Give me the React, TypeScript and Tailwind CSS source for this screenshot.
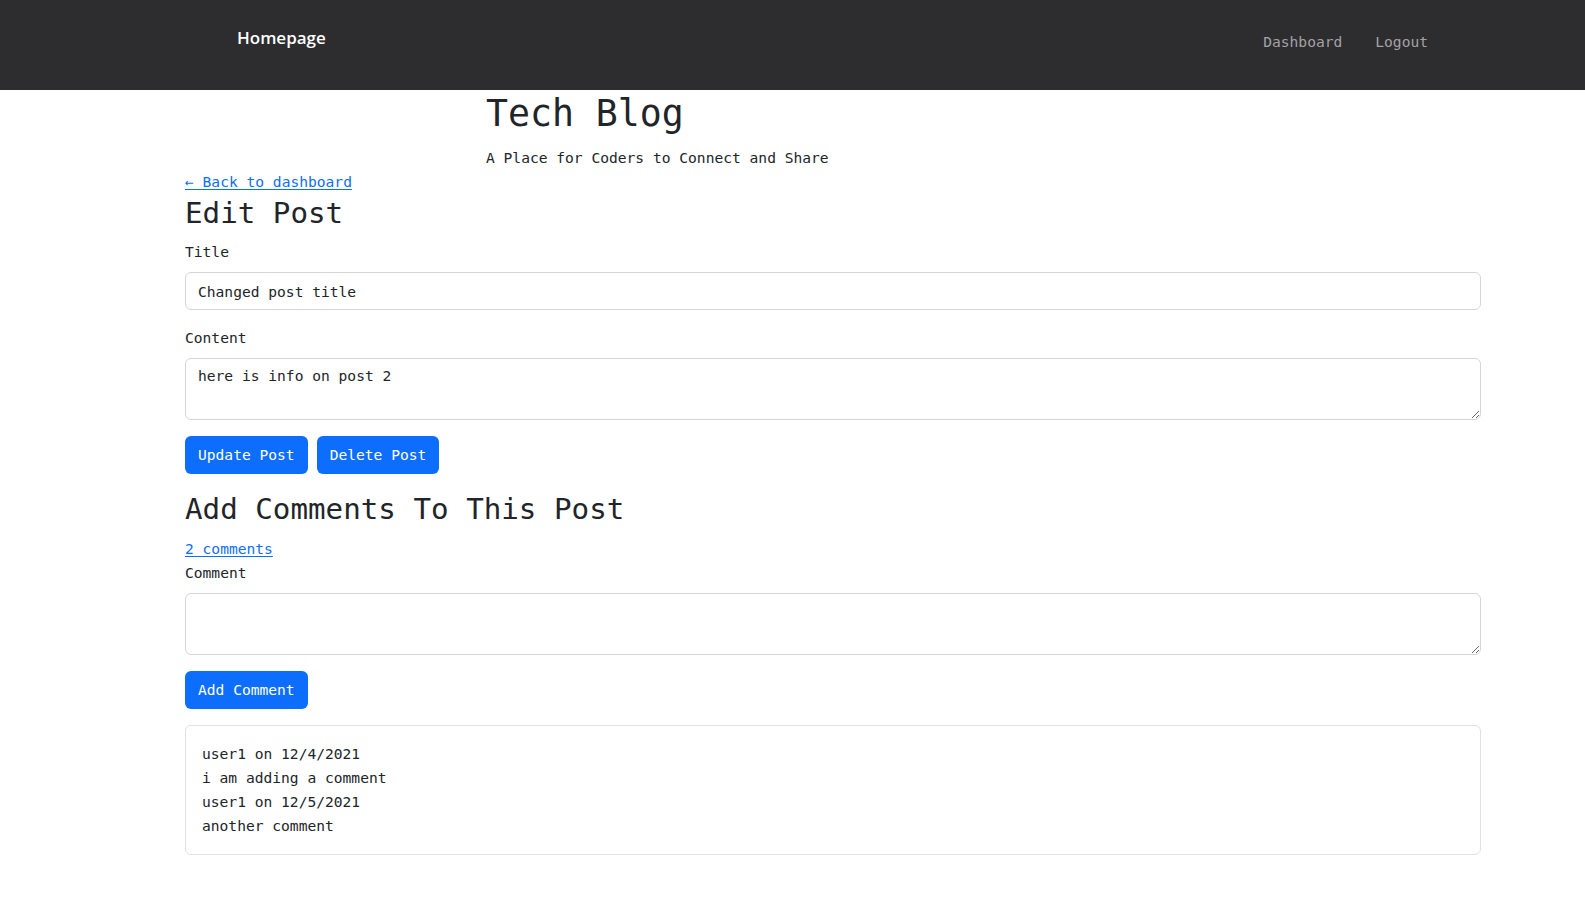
import React from "react";

const mono = "font-['DejaVu_Sans_Mono',monospace]";

export default function App() {
  return (
    <div className={`min-h-[898px] bg-white text-[#212529] ${mono} text-[14.6px] leading-6`}>
      <nav className="h-[90px] bg-[#2d2c2f] flex items-start justify-between pl-[237px] pr-[157px]">
        <a className="mt-[24px] text-white text-[17px] leading-[27px] font-semibold font-['Open_Sans',sans-serif]">
          Homepage
        </a>
        <div className="flex gap-[33px] mt-[30px] text-[#a3a3a3]">
          <a>Dashboard</a>
          <a>Logout</a>
        </div>
      </nav>

      <header className="pl-[486px]">
        <h1 className="text-[36.5px] leading-[48px] font-normal mb-2">Tech Blog</h1>
        <p>A Place for Coders to Connect and Share</p>
      </header>

      <main className="pl-[185px] pr-[104px]">
        <a className="text-[#0d6efd] underline underline-offset-2 block w-max">← Back to dashboard</a>
        <h2 className="text-[29.2px] leading-[38px] font-normal mb-2">Edit Post</h2>

        <label className="block mb-2">Title</label>
        <input
          className="block w-full h-[38px] border border-[#d3d6d9] rounded-[6px] px-3 outline-none"
          defaultValue="Changed post title"
        />

        <label className="block mt-4 mb-2">Content</label>
        <textarea
          className="block w-full h-[62px] border border-[#d3d6d9] rounded-[6px] px-3 py-[5px] outline-none"
          defaultValue="here is info on post 2"
        />

        <div className="flex gap-[9px] mt-4">
          <button className="h-[38px] px-[13px] bg-[#0d6efd] text-white rounded-[6px]">Update Post</button>
          <button className="h-[38px] px-[13px] bg-[#0d6efd] text-white rounded-[6px]">Delete Post</button>
        </div>

        <h2 className="text-[29.2px] leading-[38px] font-normal mt-[16px] mb-[9px]">Add Comments To This Post</h2>
        <a className="text-[#0d6efd] underline underline-offset-2 block w-max">2 comments</a>

        <label className="block mb-2">Comment</label>
        <textarea className="block w-full h-[62px] border border-[#d3d6d9] rounded-[6px] px-3 py-[5px] outline-none" />

        <button className="mt-4 h-[38px] px-[13px] bg-[#0d6efd] text-white rounded-[6px]">Add Comment</button>

        <div className="mt-4 border border-[#dfe1e4] rounded-[6px] px-4 py-[16px]">
          <p>user1 on 12/4/2021</p>
          <p>i am adding a comment</p>
          <p>user1 on 12/5/2021</p>
          <p>another comment</p>
        </div>
      </main>
    </div>
  );
}
